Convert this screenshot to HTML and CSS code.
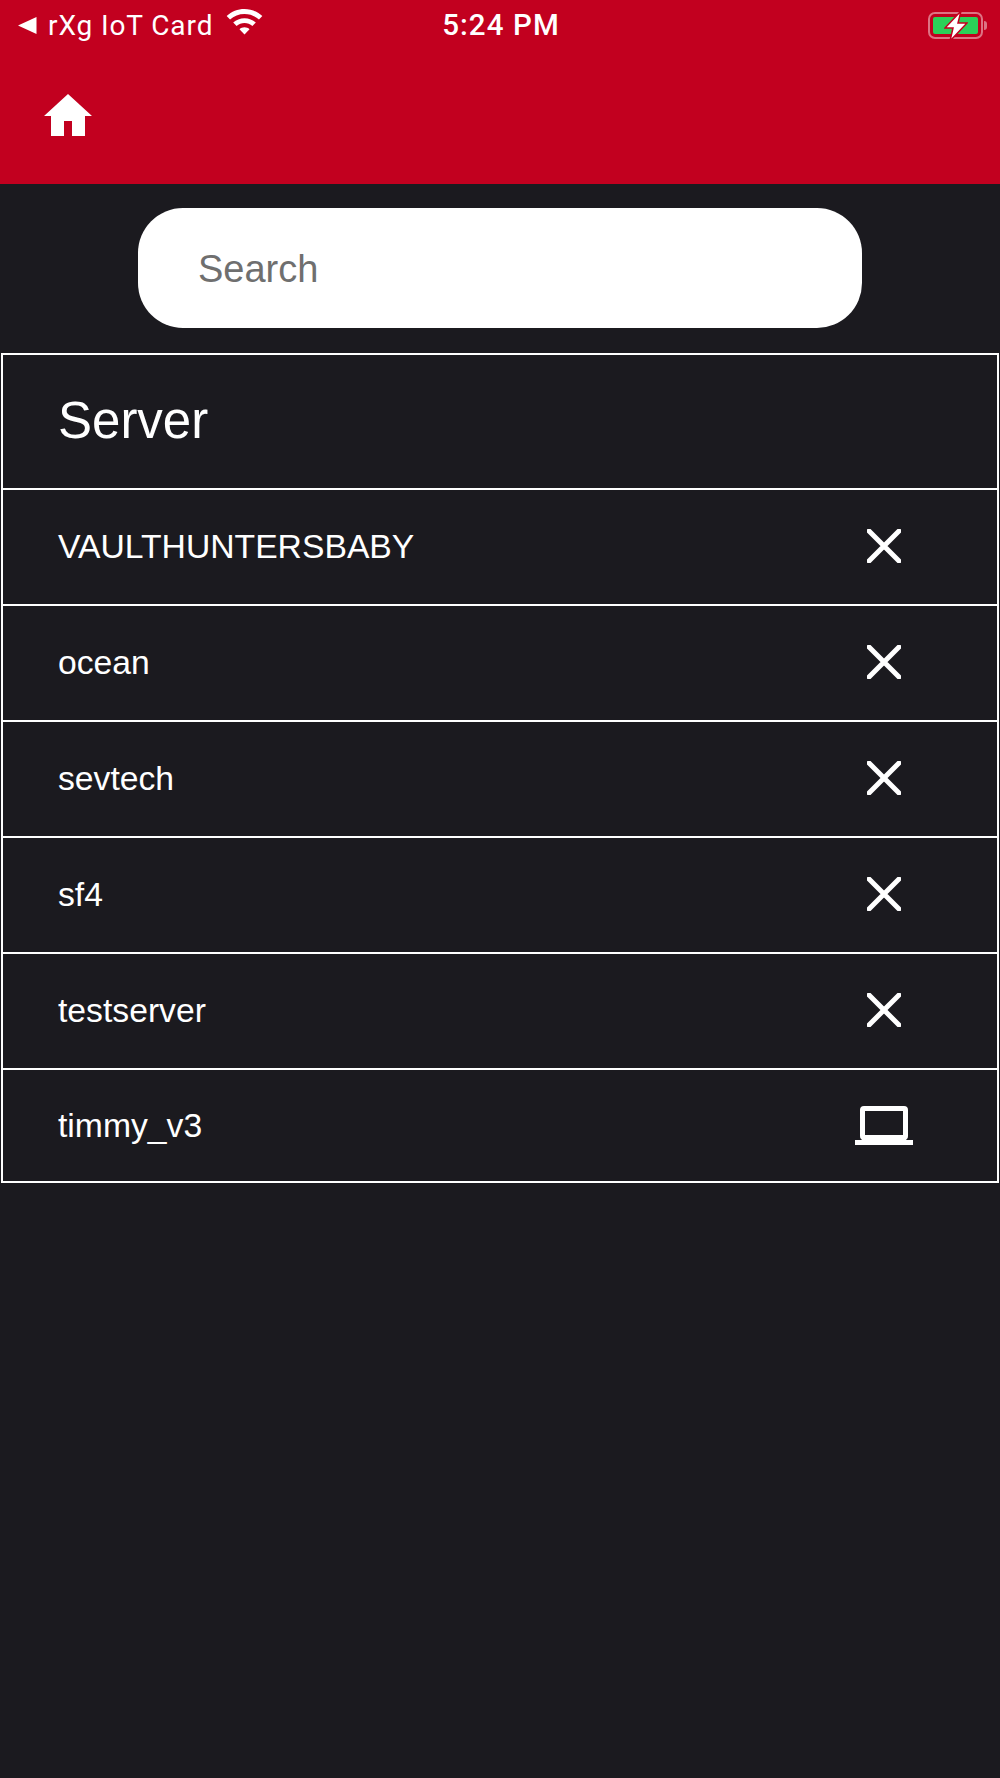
FILE: index.html
```html
<!DOCTYPE html>
<html lang="en">
<head>
    <meta charset="UTF-8">
    <meta name="viewport" content="width=device-width, initial-scale=1.0">
    <title>Server</title>
    <link rel="stylesheet" href="styles.css">
</head>
<body>
    <div class="header">
        <div class="status-bar">
            <div class="status-left">
                <svg class="back-arrow" viewBox="0 0 19 17"><path d="M0 8.500 18.500 0V17Z"/></svg>
                <span>rXg IoT Card</span>
                <svg class="wifi" viewBox="0 0 38 28"><path d="M19 0C26 0 32.500 2.700 37.500 7.300L34 11C30 7.300 24.800 5.200 19 5.200S8 7.300 4 11L.5 7.300C5.500 2.700 12 0 19 0Z"/><path d="M19 9.500C23.500 9.500 27.600 11.200 30.700 14L27.200 17.700C24.900 15.700 22.100 14.600 19 14.600S13.100 15.700 10.800 17.700L7.300 14C10.400 11.200 14.500 9.500 19 9.500Z"/><path d="M19 19C21 19 22.800 19.700 24.200 21L19 26.500 13.800 21C15.200 19.700 17 19 19 19Z"/></svg>
            </div>
            <div class="status-time">5:24 PM</div>
            <div class="battery">
                <div class="battery-shell"><div class="battery-level"></div></div>
                <div class="battery-tip"></div>
                <svg class="bolt" viewBox="0 0 24 30"><path d="M17 0 1 17H9L6 30 23 12H14Z" stroke="#c2001f" stroke-width="1.500"/></svg>
            </div>
        </div>
        <div class="home-row">
            <svg class="home-icon" viewBox="0 0 48 42"><path d="M24 0 48 22H41V42H28V27H20V42H7V22H0Z"/></svg>
        </div>
    </div>

    <div class="search-wrap">
        <input class="search" type="text" placeholder="Search">
    </div>

    <div class="server-list">
        <div class="row title-row">Server</div>
        <div class="row">
            <span>VAULTHUNTERSBABY</span>
            <span class="row-icon"><svg class="x-icon" viewBox="0 0 34 34"><path d="M2 2 32 32M32 2 2 32"/></svg></span>
        </div>
        <div class="row">
            <span>ocean</span>
            <span class="row-icon"><svg class="x-icon" viewBox="0 0 34 34"><path d="M2 2 32 32M32 2 2 32"/></svg></span>
        </div>
        <div class="row">
            <span>sevtech</span>
            <span class="row-icon"><svg class="x-icon" viewBox="0 0 34 34"><path d="M2 2 32 32M32 2 2 32"/></svg></span>
        </div>
        <div class="row">
            <span>sf4</span>
            <span class="row-icon"><svg class="x-icon" viewBox="0 0 34 34"><path d="M2 2 32 32M32 2 2 32"/></svg></span>
        </div>
        <div class="row">
            <span>testserver</span>
            <span class="row-icon"><svg class="x-icon" viewBox="0 0 34 34"><path d="M2 2 32 32M32 2 2 32"/></svg></span>
        </div>
        <div class="row last-row">
            <span>timmy_v3</span>
            <span class="row-icon"><svg class="laptop-icon" viewBox="0 0 58 40"><path d="M9 0H49A4 4 0 0 1 53 4V30A4 4 0 0 1 51 34H58V39H0V34H7A4 4 0 0 1 5 30V4A4 4 0 0 1 9 0ZM10 5V29H48V5Z" fill-rule="evenodd"/></svg></span>
        </div>
    </div>
</body>
</html>
```

FILE: styles.css
```css
body {
    margin: 0;
    padding: 0;
    min-height: 1778px;
    background-color: #1b1a1f;
    color: #fff;
    font-family: "Liberation Sans", Arial, sans-serif;
}

.header {
    height: 184px;
    background-color: #c2001f;
    box-sizing: border-box;
}

.status-bar {
    height: 50px;
    padding: 0 13px 0 18px;
    display: grid;
    grid-template-columns: 1fr auto 1fr;
    align-items: center;
    font-family: Roboto, "Liberation Sans", sans-serif;
    font-size: 28px;
}

.status-left {
    display: flex;
    align-items: center;
}

.back-arrow {
    width: 19px;
    height: 17px;
    fill: #fff;
    margin-right: 11px;
}

.status-left span {
    letter-spacing: 0.9px;
}

.wifi {
    width: 37px;
    height: 27px;
    fill: #fff;
    margin: -5px 0 0 13px;
}

.status-time {
    font-size: 29.5px;
    font-weight: 500;
    letter-spacing: 1.1px;
    padding-right: 3px;
}

.battery {
    justify-self: end;
    display: flex;
    align-items: center;
    position: relative;
}

.battery-shell {
    width: 55px;
    height: 27px;
    padding: 3px;
    box-sizing: border-box;
    border: 2px solid rgba(255, 255, 255, 0.45);
    border-radius: 7px;
}

.battery-level {
    height: 100%;
    background-color: #2bd158;
    border-radius: 2px;
}

.battery-tip {
    width: 3px;
    height: 9px;
    margin-left: 1px;
    background-color: rgba(255, 255, 255, 0.45);
    border-radius: 0 3px 3px 0;
}

.bolt {
    position: absolute;
    left: 16px;
    top: -1px;
    width: 24px;
    height: 30px;
    fill: #fff;
}

.home-row {
    padding: 44px 0 0 44px;
}

.home-icon {
    display: block;
    width: 48px;
    height: 42px;
    fill: #fff;
}

.search-wrap {
    padding: 24px 138px 25px;
}

.search {
    display: block;
    width: 100%;
    height: 120px;
    box-sizing: border-box;
    padding: 2px 60px 0;
    border: none;
    border-radius: 45px;
    background-color: #fff;
    font-family: "Liberation Sans", Arial, sans-serif;
    font-size: 38px;
    color: #333;
    outline: none;
}

.search::placeholder {
    color: #6f6f6f;
    opacity: 1;
}

.server-list {
    margin: 0 1px;
    border: 2px solid #fff;
    border-bottom: none;
}

.row {
    height: 112px;
    padding-bottom: 2px;
    padding-left: 55px;
    display: flex;
    align-items: center;
    justify-content: space-between;
    font-size: 33.7px;
    border-bottom: 2px solid #fff;
}

.title-row {
    height: 131px;
    font-size: 51px;
}

.last-row {
    height: 111px;
    padding-bottom: 0;
}

.row-icon {
    width: 58px;
    margin-right: 84px;
    display: flex;
    justify-content: center;
}

.x-icon {
    width: 34px;
    height: 34px;
    fill: none;
    stroke: #fff;
    stroke-width: 5;
    stroke-linecap: round;
}

.laptop-icon {
    width: 58px;
    height: 40px;
    fill: #fff;
}
```
